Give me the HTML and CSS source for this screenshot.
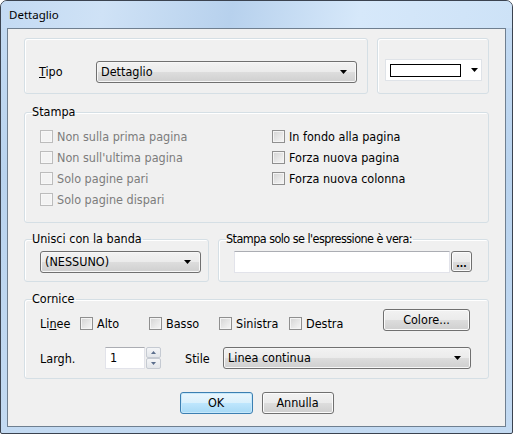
FILE: index.html
```html
<!DOCTYPE html>
<html lang="it">
<head>
<meta charset="utf-8">
<title>Dettaglio</title>
<link rel="stylesheet" href="styles.css">
</head>
<body>
<div class="window">
  <div class="titlebar">Dettaglio</div>
  <div class="client">
    <div class="row-top">
      <div class="box box-tipo">
        <span class="lbl lbl-tipo"><u>T</u>ipo</span>
        <div class="combo combo-tipo"><span class="combo-text">Dettaglio</span><svg class="arrow" width="7" height="4" viewBox="0 0 7 4"><path d="M0 0h7L3.5 4z"/></svg></div>
      </div>
      <div class="box box-color">
        <div class="color-combo"><span class="swatch"></span><svg class="arrow" width="7" height="4" viewBox="0 0 7 4"><path d="M0 0h7L3.5 4z"/></svg></div>
      </div>
    </div>

    <fieldset class="group g-stampa">
      <legend>Stampa</legend>
      <div class="chk-grid">
        <label class="chk disabled"><span class="box13"></span>Non sulla prima pagina</label>
        <label class="chk"><span class="box13"></span>In fondo alla pagina</label>
        <label class="chk disabled"><span class="box13"></span>Non sull'ultima pagina</label>
        <label class="chk"><span class="box13"></span>Forza nuova pagina</label>
        <label class="chk disabled"><span class="box13"></span>Solo pagine pari</label>
        <label class="chk"><span class="box13"></span>Forza nuova colonna</label>
        <label class="chk disabled"><span class="box13"></span>Solo pagine dispari</label>
      </div>
    </fieldset>

    <div class="row-mid">
      <fieldset class="group g-unisci">
        <legend>Unisci con la banda</legend>
        <div class="combo combo-unisci"><span class="combo-text">(NESSUNO)</span><svg class="arrow" width="7" height="4" viewBox="0 0 7 4"><path d="M0 0h7L3.5 4z"/></svg></div>
      </fieldset>
      <fieldset class="group g-expr">
        <legend class="legend-tight">Stampa solo se l'espressione è vera:</legend>
        <div class="expr-row">
          <div class="textbox expr-input"></div>
          <div class="btn btn-dots">...</div>
        </div>
      </fieldset>
    </div>

    <fieldset class="group g-cornice">
      <legend>Cornice</legend>
      <div class="linee-row">
        <span class="lbl lbl-linee">Li<u>n</u>ee</span>
        <label class="chk chk-alto"><span class="box13"></span>Alto</label>
        <label class="chk chk-basso"><span class="box13"></span>Basso</label>
        <label class="chk chk-sin"><span class="box13"></span>Sinistra</label>
        <label class="chk"><span class="box13"></span>Destra</label>
        <div class="btn btn-colore">Colore...</div>
      </div>
      <div class="largh-row">
        <span class="lbl lbl-largh">Largh.</span>
        <div class="textbox spin-input">1</div>
        <div class="spinner">
          <div class="spin-btn"><svg width="5" height="3" viewBox="0 0 5 3"><path d="M0 3h5L2.5 0z"/></svg></div>
          <div class="spin-btn"><svg width="5" height="3" viewBox="0 0 5 3"><path d="M0 0h5L2.5 3z"/></svg></div>
        </div>
        <span class="lbl lbl-stile">Stile</span>
        <div class="combo combo-stile"><span class="combo-text">Linea continua</span><svg class="arrow" width="7" height="4" viewBox="0 0 7 4"><path d="M0 0h7L3.5 4z"/></svg></div>
      </div>
    </fieldset>

    <div class="buttons">
      <div class="btn btn-ok">OK</div>
      <div class="btn btn-annulla">Annulla</div>
    </div>
  </div>
</div>
</body>
</html>
```

FILE: styles.css
```css
html, body {
  margin: 0;
  padding: 0;
  background: #ffffff;
}

.window {
  box-sizing: border-box;
  width: 513px;
  height: 434px;
  border: 1px solid #3b4350;
  border-radius: 7px 7px 2px 2px;
  background: linear-gradient(to bottom, #c4dbf3 0%, #b9d3ee 40%, #c3daf2 100%);
  padding: 0 6px 6px 6px;
  display: flex;
  flex-direction: column;
}

.titlebar {
  height: 27px;
  line-height: 28px;
  font-family: "Noto Sans", "DejaVu Sans", sans-serif;
  font-size: 11.5px;
  color: #000;
  background: linear-gradient(100deg, #c3daf3 0%, #cfe2f6 20%, #b7d1ed 45%, #d6e8fa 70%, #cde2f7 100%);
  margin: 0 -6px;
  padding-left: 8px;
  border-radius: 6px 6px 0 0;
}

.client {
  flex: 1;
  border: 1px solid #6f7f90;
  background: #f0f0f0;
  padding: 9px 16px 0 16px;
  font-family: "DejaVu Sans", sans-serif;
  font-stretch: condensed;
  font-size: 12.5px;
  color: #000;
}

u { text-decoration: underline; text-underline-offset: 1px; }

/* ---------- top row ---------- */
.row-top {
  display: flex;
  gap: 9px;
  height: 56px;
}

.box {
  box-sizing: border-box;
  border: 1px solid #d5dfe5;
  border-radius: 3px;
  box-shadow: inset 1px 1px 0 #ffffff;
  display: flex;
  align-items: flex-start;
}

.box-tipo {
  width: 344px;
  padding: 22px 0 0 14px;
}

.box-color {
  flex: 1;
  padding: 20px 0 0 7px;
}

.lbl-tipo {
  width: 57px;
  line-height: 22px;
}

/* ---------- combo box ---------- */
.combo {
  box-sizing: border-box;
  height: 22px;
  border: 1px solid #707070;
  border-radius: 3px;
  background: linear-gradient(to bottom, #f2f2f2 0%, #ebebeb 50%, #dddddd 51%, #cfcfcf 100%);
  box-shadow: inset 0 0 0 1px #f7f7f7;
  display: flex;
  align-items: center;
  padding: 0 9px 0 4px;
}

.combo-text {
  flex: 1;
  line-height: 20px;
}

.combo-tipo { width: 261px; }
.combo-unisci { width: 161px; }
.combo-stile { flex: 1; }

.arrow { fill: #000; display: block; }

.color-combo {
  box-sizing: border-box;
  width: 97px;
  height: 22px;
  background: #ffffff;
  border: 1px solid #dfe3e8;
  display: flex;
  align-items: center;
  padding: 0 0 0 4px;
}

.swatch {
  box-sizing: border-box;
  width: 71px;
  height: 13px;
  border: 1px solid #000;
  background: #fff;
  margin-right: 10px;
}

/* ---------- group boxes ---------- */
.group {
  margin: 0;
  padding: 0;
  border: 1px solid #d5dfe5;
  border-radius: 3px;
  box-shadow: inset 1px 1px 0 #ffffff;
  min-width: 0;
}

.group legend {
  padding: 0 1px 0 0;
  margin-left: -8px;
  line-height: 14px;
}

.group legend.legend-tight {
  letter-spacing: -0.55px;
}

.g-stampa {
  margin-top: 11px;
  padding: 7px 0 12px 15px;
}

.chk-grid {
  display: grid;
  grid-template-columns: 232px 1fr;
  grid-auto-rows: 21px;
}

.chk {
  display: flex;
  align-items: center;
  gap: 4px;
  white-space: nowrap;
}

.box13 {
  box-sizing: border-box;
  width: 13px;
  height: 13px;
  flex: none;
  border: 1px solid #8f8f8f;
  background: linear-gradient(135deg, #d3d3d3 0%, #e9e9e9 60%, #f6f6f6 100%);
  box-shadow: inset 0 0 0 1px #f4f4f4;
}

.chk.disabled { color: #7c7c7c; }
.chk.disabled .box13 {
  border-color: #bcbcbc;
  background: #f3f3f3;
  box-shadow: inset 0 0 0 1px #f7f7f7;
}

/* ---------- middle row ---------- */
.row-mid {
  display: flex;
  gap: 9px;
  margin-top: 9px;
}

.g-unisci {
  width: 185px;
  box-sizing: border-box;
  padding: 5px 0 8px 15px;
}

.g-expr {
  flex: 1;
  padding: 5px 0 8px 15px;
}

.expr-row {
  display: flex;
  gap: 1px;
}

.textbox {
  box-sizing: border-box;
  height: 22px;
  background: #ffffff;
  border: 1px solid #e2e3ea;
  border-top-color: #abadb3;
}

.expr-input { width: 216px; }

/* ---------- buttons ---------- */
.btn {
  box-sizing: border-box;
  height: 22px;
  border: 1px solid #707070;
  border-radius: 3px;
  background: linear-gradient(to bottom, #f2f2f2 0%, #ebebeb 50%, #dddddd 51%, #cfcfcf 100%);
  box-shadow: inset 0 0 0 1px #fbfbfb;
  display: flex;
  align-items: center;
  justify-content: center;
  line-height: 20px;
}

.btn-dots {
  width: 21px;
  height: 21px;
  font-weight: bold;
  font-size: 10px;
  align-items: flex-end;
  line-height: 14px;
}

/* ---------- cornice ---------- */
.g-cornice {
  margin-top: 10px;
  padding: 6px 17px 9px 15px;
}

.linee-row {
  display: flex;
  align-items: center;
  height: 22px;
}

.lbl-linee { width: 40px; }
.chk-alto { width: 69px; }
.chk-basso { width: 70px; }
.chk-sin { width: 70px; }

.btn-colore {
  width: 87px;
  margin-left: auto;
  margin-right: 1px;
  align-self: flex-start;
  margin-top: -3px;
}

.largh-row {
  display: flex;
  align-items: center;
  margin-top: 13px;
  height: 22px;
}

.lbl-largh { width: 65px; }

.spin-input {
  width: 40px;
  padding-left: 4px;
  line-height: 20px;
}

.spinner {
  display: flex;
  flex-direction: column;
  margin-left: 1px;
  width: 15px;
  height: 22px;
}

.spin-btn {
  box-sizing: border-box;
  height: 11px;
  border: 1px solid #c5cad2;
  border-radius: 2px;
  background: linear-gradient(to bottom, #f4f5f7, #e3e6ea);
  display: flex;
  align-items: center;
  justify-content: center;
}

.spin-btn svg { fill: #5b6e8c; display: block; }

.lbl-stile {
  margin-left: 24px;
  width: 38px;
}

/* ---------- dialog buttons ---------- */
.buttons {
  display: flex;
  justify-content: center;
  gap: 9px;
  margin-top: 13px;
}

.btn-ok {
  width: 73px;
  border-color: #3c7fb1;
  background: linear-gradient(to bottom, #eaf6fd 0%, #d9f0fc 50%, #bee6fd 51%, #a7d9f5 100%);
  box-shadow: inset 0 0 0 1px #c6e8fb;
}

.btn-annulla {
  width: 72px;
}
```
